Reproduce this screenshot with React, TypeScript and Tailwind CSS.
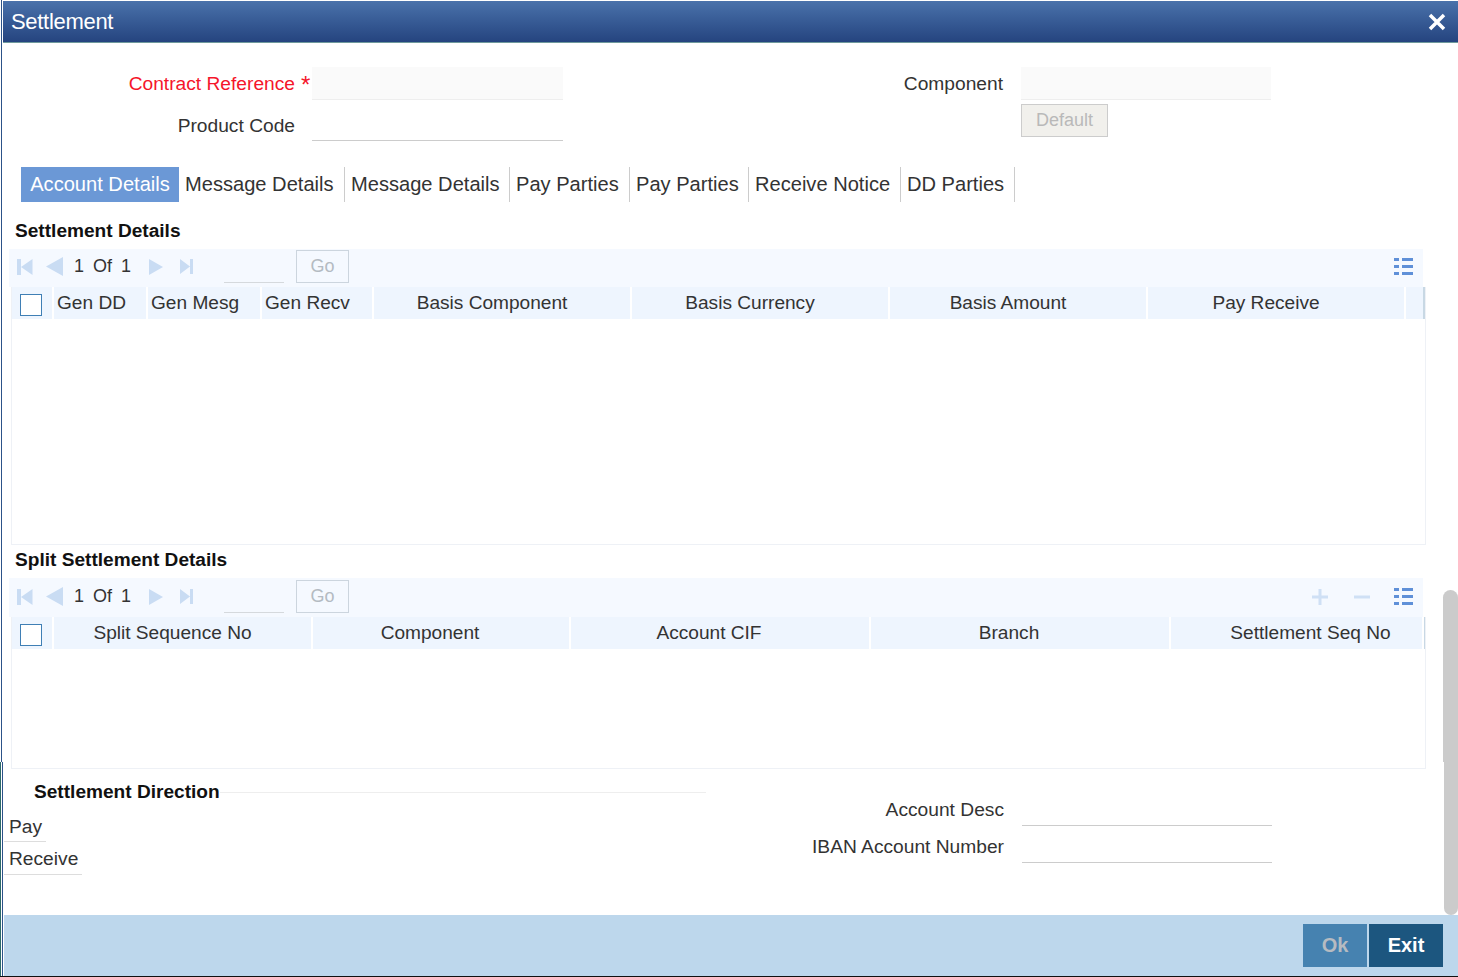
import React from 'react';

const NavIcons = () => (
  <div className="flex items-center w-[200px]">
    <svg width="16" height="16" viewBox="0 0 16 16" className="ml-[8px]">
      <path d="M0 0h4v16H0zM15.500 0v16L4 8z" fill="#c9dcf3" />
    </svg>
    <svg width="17" height="19" viewBox="0 0 17 19" className="ml-[13px]">
      <path d="M17 0v19L0 9.500z" fill="#c9dcf3" />
    </svg>
    <span className="ml-[11px]">1</span>
    <span className="ml-[9px]">Of</span>
    <span className="ml-[9px]">1</span>
    <svg width="14" height="16" viewBox="0 0 14 16" className="ml-[18px]">
      <path d="M0 0v16l14-8z" fill="#c9dcf3" />
    </svg>
    <svg width="13" height="15" viewBox="0 0 13 15" className="ml-[17px]">
      <path d="M0 0v15l10-7.500zM10 0h3v15h-3z" fill="#c9dcf3" />
    </svg>
  </div>
);

const ListIcon = () => (
  <svg width="19" height="17" viewBox="0 0 19 17" className="ml-[23px] block">
    <path d="M0 0h5v3H0zM8 0h11v3H8zM0 7h5v3H0zM8 7h11v3H8zM0 14h5v3H0zM8 14h11v3H8z" fill="#5f90d8" />
  </svg>
);

const Toolbar = ({ extra }: { extra?: boolean }) => (
  <div className={`flex items-start ${extra ? 'h-[39px] pt-[2px]' : 'h-[38px] pt-[1px]'} shrink-0 w-[1414px] ml-[6px] bg-[#f5f9ff] text-[18px] leading-[33px] text-[#333]`}>
    <div className="h-[33px] flex items-center"><NavIcons /></div>
    <div className="w-[60px] h-[33px] border-b border-[#d5d9dd] ml-[15px]" />
    <div className="w-[53px] h-[33px] ml-[12px] border border-[#ccd5de] flex items-center justify-center text-[#b4bbc2]">Go</div>
    <div className="flex-1" />
    <div className="h-[33px] flex items-center mr-[10px]">
      {extra && (
        <>
          <svg width="18" height="18" viewBox="0 0 18 18">
            <path d="M7.500 1h3v6.500H17v3h-6.500V17h-3v-6.500H1v-3h6.500z" fill="#cfe0f5" />
          </svg>
          <svg width="18" height="18" viewBox="0 0 18 18" className="ml-[24px]">
            <path d="M1 7.500h16v3H1z" fill="#cfe0f5" />
          </svg>
        </>
      )}
      <ListIcon />
    </div>
  </div>
);

const Checkbox = () => (
  <div className="w-[42px] h-full shrink-0 flex items-center pl-[8px] pt-[3px] border-r-2 border-white">
    <div className="w-[22px] h-[22px] bg-white border border-[#3f7fb5]" />
  </div>
);

const HeaderCell = ({ w, pos, children }: { w: string; pos: string; children: React.ReactNode }) => (
  <div className={`${w} h-full shrink-0 flex items-center border-r-2 border-white ${pos}`}>
    {children}
  </div>
);

const tabs = [
  ['Message Details', 'w-[166px]'],
  ['Message Details', 'w-[165px]'],
  ['Pay Parties', 'w-[120px]'],
  ['Pay Parties', 'w-[119px]'],
  ['Receive Notice', 'w-[152px]'],
  ['DD Parties', 'w-[114px]'],
];

export default function App() {
  return (
    <div className="relative w-[1458px] h-[977px] overflow-hidden bg-white flex flex-col pl-[3px] border-b border-b-[#111] font-['Liberation_Sans',Arial,sans-serif] text-[#333] text-[19.200px]">
      {/* window edge */}
      <div className="absolute left-px top-0 w-px h-[762px] bg-[#2c5288]" />
      <div className="absolute left-0 top-[762px] w-px h-[214px] bg-[#2c6a6a]" />
      <div className="absolute left-[2px] top-[762px] w-px h-[214px] bg-[#2c5288]" />

      {/* title bar */}
      <div className="h-[42px] mt-px shrink-0 flex items-center justify-between bg-gradient-to-b from-[#4a72ab] to-[#25447f] border-b border-[#6f9a9c] pl-[8px] pr-[11px]">
        <span className="text-white text-[22px] tracking-[-0.3px]">Settlement</span>
        <svg width="20" height="20" viewBox="0 0 20 20">
          <path d="M3 3l14 14M17 3L3 17" stroke="#fff" strokeWidth="3.500" />
        </svg>
      </div>

      <div className="flex-1 flex flex-col min-h-0">
        {/* contract form */}
        <div className="flex pt-[24px] h-[124px] shrink-0">
          <div className="w-[760px] flex flex-col">
            <div className="flex h-[33px]">
              <div className="w-[292px] text-right text-[#f5152b] leading-[33px]">Contract Reference</div>
              <div className="w-[17px] pl-[6px] text-[24px] text-[#f5152b] leading-[36px]">*</div>
              <div className="w-[251px] bg-[#fafafa] border-b border-[#eee]" />
            </div>
            <div className="flex h-[33px] mt-[8px]">
              <div className="w-[292px] text-right leading-[35px]">Product Code</div>
              <div className="w-[17px]" />
              <div className="w-[251px] border-b border-[#ccc]" />
            </div>
          </div>
          <div className="flex">
            <div className="w-[240px] text-right leading-[33px]">Component</div>
            <div className="ml-[18px] flex flex-col">
              <div className="w-[250px] h-[33px] bg-[#fafafa] border-b border-[#eee]" />
              <div className="mt-[4px] w-[87px] h-[33px] bg-[#f1f0ec] border border-[#ccc] flex items-center justify-center text-[18px] text-[#b9b9b9]">Default</div>
            </div>
          </div>
        </div>

        {/* tabs */}
        <div className="flex h-[35px] ml-[18px] shrink-0 leading-[35px] text-[20.100px]">
          <div className="w-[158px] bg-[#6b98d6] text-white text-center">Account Details</div>
          {tabs.map(([label, w], i) => (
            <div key={i} className={`${w} pl-[6px] border-r border-[#ccc]`}>{label}</div>
          ))}
        </div>

        {/* settlement details */}
        <div className="h-[47px] shrink-0 pl-[12px] pt-[18px] font-bold text-[19.100px] leading-[22px] text-[#111]">Settlement Details</div>
        <Toolbar />
        <div className="ml-[8px] w-[1415px] h-[258px] shrink-0 border-l border-r border-b border-[#eef1f6] text-[19.100px]">
          <div className="flex items-center h-[32px] bg-[#eef5fe] border-r-2 border-[#c8d8e4]">
            <Checkbox />
            <HeaderCell w="w-[94px]" pos="pl-[3px]">Gen DD</HeaderCell>
            <HeaderCell w="w-[114px]" pos="pl-[3px]">Gen Mesg</HeaderCell>
            <HeaderCell w="w-[112px]" pos="pl-[3px]">Gen Recv</HeaderCell>
            <HeaderCell w="w-[258px]" pos="justify-center pr-[20px]">Basis Component</HeaderCell>
            <HeaderCell w="w-[258px]" pos="justify-center pr-[20px]">Basis Currency</HeaderCell>
            <HeaderCell w="w-[258px]" pos="justify-center pr-[20px]">Basis Amount</HeaderCell>
            <HeaderCell w="w-[258px]" pos="justify-center pr-[20px]">Pay Receive</HeaderCell>
          </div>
        </div>

        {/* split settlement details */}
        <div className="h-[33px] shrink-0 pl-[12px] pt-[4px] font-bold text-[19.100px] leading-[22px] text-[#111]">Split Settlement Details</div>
        <Toolbar extra />
        <div className="ml-[8px] w-[1415px] h-[152px] shrink-0 border-l border-r border-b border-[#eef1f6] text-[19.100px]">
          <div className="flex items-center h-[32px] bg-[#eef5fe] border-r-2 border-[#c8d8e4]">
            <Checkbox />
            <HeaderCell w="w-[259px]" pos="justify-center pr-[20px]">Split Sequence No</HeaderCell>
            <HeaderCell w="w-[258px]" pos="justify-center pr-[22px]">Component</HeaderCell>
            <HeaderCell w="w-[300px]" pos="justify-center pr-[22px]">Account CIF</HeaderCell>
            <HeaderCell w="w-[300px]" pos="justify-center pr-[22px]">Branch</HeaderCell>
            <HeaderCell w="w-[253px]" pos="justify-center pl-[28px]">Settlement Seq No</HeaderCell>
          </div>
        </div>

        {/* direction and account */}
        <div className="flex flex-1 min-h-0">
          <div className="w-[703px] shrink-0 pt-[10px]">
            <div className="flex items-center h-[24px] pl-[31px]">
              <span className="font-bold text-[19.100px] text-[#111] pt-[2px]">Settlement Direction</span>
              <div className="flex-1 h-px bg-[#eee] mt-[2px]" />
            </div>
            <div className="mt-[7px] w-[42px] ml-px pl-[5px] h-[32px] leading-[34px] border-b border-[#ddd]">Pay</div>
            <div className="w-[78px] ml-px pl-[5px] h-[33px] leading-[33px] border-b border-[#ddd]">Receive</div>
          </div>
          <div className="pt-[24px]">
            <div className="flex h-[33px]">
              <div className="w-[298px] text-right leading-[33px]">Account Desc</div>
              <div className="ml-[18px] w-[250px] border-b border-[#ccc]" />
            </div>
            <div className="flex h-[37px]">
              <div className="w-[298px] text-right leading-[41px]">IBAN Account Number</div>
              <div className="ml-[18px] w-[250px] border-b border-[#ccc]" />
            </div>
          </div>
        </div>
      </div>

      {/* footer */}
      <div className="h-[61px] shrink-0 ml-px bg-[#bdd7ec] flex items-start justify-end pt-[9px] pr-[15px] gap-[2px] font-bold text-[20px]">
        <div className="w-[64px] h-[43px] pb-[2px] bg-[#4682b0] text-[#b6bbc1] flex items-center justify-center">Ok</div>
        <div className="w-[74px] h-[43px] pb-[2px] bg-[#1c567f] text-white flex items-center justify-center">Exit</div>
      </div>

      {/* scrollbar thumb */}
      <div className="absolute left-[1443px] top-[590px] w-[15px] h-[325px] flex flex-col items-end">
        <div className="w-[15px] h-[172px] rounded-t-[8px] bg-[#cbcbcb]" />
        <div className="w-[14px] h-[153px] rounded-b-[8px] bg-[#cbcbcb]" />
      </div>
    </div>
  );
}
